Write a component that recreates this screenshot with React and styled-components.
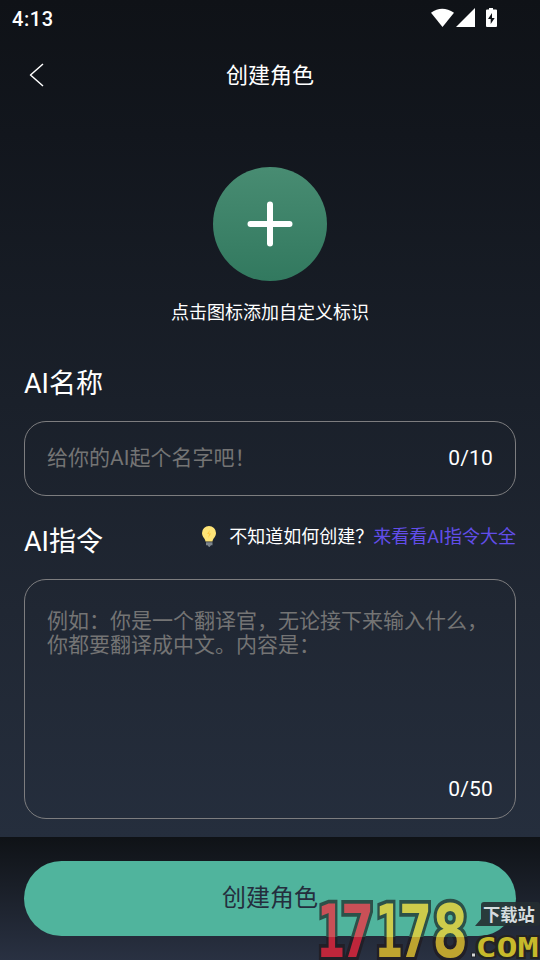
import React from "react";
import styled, { createGlobalStyle } from "styled-components";

const GlobalStyle = createGlobalStyle`
  * { box-sizing: border-box; }
  body { margin: 0; background: #10141a; }
`;

const Screen = styled.div`
  position: relative;
  width: 540px;
  height: 960px;
  overflow: hidden;
  display: flex;
  flex-direction: column;
  color: #fff;
  font-family: Roboto, "Noto Sans CJK SC", sans-serif;
`;

const Page = styled.div`
  height: 837px;
  display: flex;
  flex-direction: column;
  background: linear-gradient(180deg, #0f1217 0%, #12161d 16%, #1a202a 48%, #202733 73%, #252e3d 100%);
`;

const StatusBar = styled.header`
  height: 36px;
  flex: none;
  padding: 1px 40px 0 12px;
  display: flex;
  align-items: center;
  justify-content: space-between;
  font-size: 20px;
  font-weight: 500;
  letter-spacing: 0.6px;
`;

const StatusIcons = styled.svg`
  width: 70px;
  height: 20px;
  margin-top: -2px;
`;

const NavBar = styled.nav`
  height: 78px;
  flex: none;
  display: grid;
  grid-template-columns: 74px 1fr 74px;
  align-items: center;
`;

const BackButton = styled.button`
  height: 32px;
  padding: 0 0 0 28px;
  border: 0;
  background: none;
  display: flex;
  align-items: center;
`;

const Title = styled.h1`
  margin: 2px 0 0;
  text-align: center;
  font-size: 22px;
  line-height: 32px;
  font-weight: 400;
`;

const AvatarPicker = styled.section`
  margin-top: 53px;
  display: flex;
  flex-direction: column;
  align-items: center;
`;

const AddButton = styled.button`
  width: 114px;
  height: 114px;
  padding: 0;
  border: 0;
  border-radius: 50%;
  background: linear-gradient(180deg, #488c72, #32795f);
  display: grid;
  place-items: center;
`;

const Caption = styled.p`
  margin: 19px 0 0;
  font-size: 18px;
  line-height: 26px;
`;

const FieldHeader = styled.div`
  height: 40px;
  margin: ${(p) => p.$top}px 24px 0;
  display: flex;
  align-items: center;
  justify-content: space-between;
`;

const FieldLabel = styled.h2`
  margin: 0;
  font-size: 27px;
  line-height: 40px;
  font-weight: 400;
`;

const Hint = styled.div`
  display: flex;
  align-items: center;
  margin-top: -11px;
  font-size: 18px;
  line-height: 26px;
`;

const Bulb = styled.svg`
  width: 16px;
  height: 22px;
  margin-right: 12px;
`;

const HintLink = styled.a`
  color: #624eea;
`;

const Field = styled.div`
  height: ${(p) => p.$height}px;
  margin: ${(p) => p.$top}px 24px 0;
  padding: ${(p) => (p.$multiline ? "29px 22px 15px" : "0 22px 2px")};
  border: 1px solid #7d7d7f;
  border-radius: 22px;
  display: flex;
  flex-direction: ${(p) => (p.$multiline ? "column" : "row")};
  align-items: ${(p) => (p.$multiline ? "stretch" : "center")};
  justify-content: space-between;
`;

const Placeholder = styled.div`
  color: #747474;
  font-size: 21px;
  line-height: 24px;
  white-space: pre-line;
`;

const Counter = styled.div`
  text-align: right;
  font-size: 21px;
  line-height: 28px;
  letter-spacing: 0.2px;
`;

const Footer = styled.footer`
  height: 123px;
  padding: 24px 24px 0;
  background: linear-gradient(180deg, #0f1216, #293142);
`;

const SubmitButton = styled.button`
  width: 100%;
  height: 75px;
  padding: 0 0 1px;
  border: 0;
  border-radius: 38px;
  background: #50b49d;
  color: #242e3d;
  font: 400 24px/34px Roboto, "Noto Sans CJK SC", sans-serif;
`;

const Watermark = styled.svg`
  position: absolute;
  right: 0;
  bottom: 0;
  width: 230px;
  height: 70px;
  pointer-events: none;
`;

const digits = [
  { d: "1", x: 9.5, sx: 0.63, tone: "red" },
  { d: "7", x: 33.5, sx: 0.77, tone: "red" },
  { d: "1", x: 67.5, sx: 0.63, tone: "gold" },
  { d: "7", x: 91.5, sx: 0.77, tone: "gold" },
  { d: "8", x: 125, sx: 0.84, tone: "gold" },
];

function SiteMark() {
  return (
    <Watermark viewBox="0 0 230 70">
      <defs>
        <linearGradient id="red" gradientUnits="userSpaceOnUse" x1="0" y1="-55" x2="0" y2="0">
          <stop offset="0.64" stopColor="#ca5057" />
          <stop offset="0.65" stopColor="#bf263b" />
        </linearGradient>
        <linearGradient id="gold" gradientUnits="userSpaceOnUse" x1="0" y1="-55" x2="0" y2="0">
          <stop offset="0.64" stopColor="#cdcc4b" />
          <stop offset="0.65" stopColor="#bea42f" />
        </linearGradient>
        <linearGradient id="rim" gradientUnits="userSpaceOnUse" x1="0" y1="-55" x2="0" y2="0">
          <stop offset="0.64" stopColor="#2c5149" />
          <stop offset="0.65" stopColor="#211f27" />
        </linearGradient>
      </defs>
      <g fontFamily="DejaVu Sans Mono, monospace" fontWeight="700" fontSize="73" paintOrder="stroke" stroke="url(#rim)" strokeWidth="7.5">
        {digits.map(({ d, x, sx, tone }) => (
          <text key={x} transform={`translate(${x} 66.5) scale(${sx} 1)`} x="-4" fill={`url(#${tone})`}>
            {d}
          </text>
        ))}
      </g>
      <path d="M174 12h53q3 0 3 3v18q0 3-3 3h-62l6-7V15q0-3 3-3z" fill="#252e32" fillOpacity="0.9" />
      <text x="173" y="30.500" fill="#d5dcde" fontFamily="Noto Sans CJK SC, sans-serif" fontWeight="700" fontSize="17.300">
        下载站
      </text>
      <rect x="161.500" y="63" width="4" height="4" fill="#d4d6d7" stroke="#20242b" />
      <g fontFamily="DejaVu Sans Mono, monospace" fontWeight="700" fontSize="27" paintOrder="stroke" fill="#c7b92b" stroke="#252322" strokeWidth="4">
        {["C", "O", "M"].map((c, i) => (
          <text key={c} transform={`translate(${165.5 + i * 21} 67) scale(1.3 1)`}>
            {c}
          </text>
        ))}
      </g>
    </Watermark>
  );
}

export default function App() {
  return (
    <Screen>
      <GlobalStyle />
      <Page>
        <StatusBar>
          <span>4:13</span>
          <StatusIcons viewBox="0 0 70 20" fill="#fff">
            <path d="M1 4.800Q12-3.500 24 4.800L12.500 19z" />
            <path d="M26 19L45 0v19z" />
            <path fillRule="evenodd" d="M59 0h4v1.500h3a1 1 0 0 1 1 1V18a1 1 0 0 1-1 1h-9a1 1 0 0 1-1-1V2.500a1 1 0 0 1 1-1h2zM62 5l-4 6h2.700v5l4-6H62z" />
          </StatusIcons>
        </StatusBar>
        <NavBar>
          <BackButton>
            <svg width="18" height="26" fill="none" stroke="#fff" strokeWidth="1.500">
              <path d="M15 2L2.500 13L15 24" strokeLinejoin="round" />
            </svg>
          </BackButton>
          <Title>创建角色</Title>
        </NavBar>
        <AvatarPicker>
          <AddButton>
            <svg width="46" height="46" stroke="#fff" strokeWidth="6" strokeLinecap="round">
              <path d="M23 3.500v39M3.500 23h39" />
            </svg>
          </AddButton>
          <Caption>点击图标添加自定义标识</Caption>
        </AvatarPicker>
        <FieldHeader $top={38}>
          <FieldLabel>AI名称</FieldLabel>
        </FieldHeader>
        <Field $height={75} $top={17}>
          <Placeholder>给你的AI起个名字吧！</Placeholder>
          <Counter>0/10</Counter>
        </Field>
        <FieldHeader $top={26}>
          <FieldLabel>AI指令</FieldLabel>
          <Hint>
            <Bulb viewBox="0 0 16 22">
              <path d="M4.500 15.500C4 12 1 11 1 7A7 7 0 0 1 15 7C15 11 12 12 11.500 15.500z" fill="#fee477" />
              <path d="M8.800 4L6 8h2l-.8 4L10 7.500H8z" fill="#fdc944" />
              <path d="M5 16.200h6.500v3H10L8.500 21H8L6.500 19.200H5z" fill="#7d858b" />
            </Bulb>
            <span>不知道如何创建？</span>
            <HintLink>来看看AI指令大全</HintLink>
          </Hint>
        </FieldHeader>
        <Field $height={240} $top={17} $multiline>
          <Placeholder>{"例如：你是一个翻译官，无论接下来输入什么，\n你都要翻译成中文。内容是："}</Placeholder>
          <Counter>0/50</Counter>
        </Field>
      </Page>
      <Footer>
        <SubmitButton>创建角色</SubmitButton>
      </Footer>
      <SiteMark />
    </Screen>
  );
}
